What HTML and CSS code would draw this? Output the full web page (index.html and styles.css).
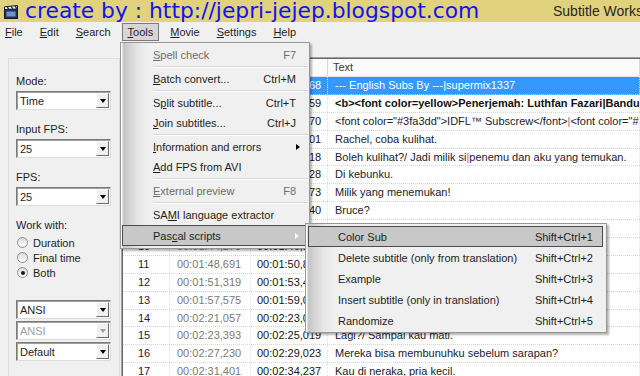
FILE: index.html
```html
<!DOCTYPE html>
<html lang="en">
<head>
  <meta charset="UTF-8">
  <title>Subtitle Workshop</title>
  <link rel="stylesheet" href="styles.css">
</head>
<body>
  <!-- title bar -->
  <div class="titlebar">
    <svg class="app-icon" viewBox="0 0 14 14" width="14" height="14">
      <rect x="0.5" y="4.5" width="13" height="9" fill="#22324e" stroke="#111a2a"/>
      <rect x="2.5" y="6.5" width="9" height="5" fill="#6d93cf"/>
      <path d="M0.5 1.8 L13.5 0.5 L13.5 4 L0.5 4.5 Z" fill="#f4f6fa" stroke="#111a2a"/>
      <path d="M3 1.4 L4.8 4.3 M7 1 L8.8 4.1 M11 0.7 L12.8 3.8" stroke="#22324e" stroke-width="1.4"/>
    </svg>
    <span class="caption">create by : http://jepri-jejep.blogspot.com</span>
    <span class="wintitle">Subtitle Workshop</span>
  </div>

  <!-- menu bar -->
  <div class="menubar">
    <span class="mi"><u>F</u>ile</span>
    <span class="mi"><u>E</u>dit</span>
    <span class="mi"><u>S</u>earch</span>
    <span class="mi open"><u>T</u>ools</span>
    <span class="mi"><u>M</u>ovie</span>
    <span class="mi"><u>S</u>ettings</span>
    <span class="mi"><u>H</u>elp</span>
  </div>
  <div class="toolbar"></div>

  <div class="main">
    <!-- left panel -->
    <div class="side">
      <div class="group">
        <div class="field">
          <div class="lbl">Mode:</div>
          <div class="combo"><span>Time</span><i class="drop"></i></div>
        </div>
        <div class="field">
          <div class="lbl">Input FPS:</div>
          <div class="combo"><span>25</span><i class="drop"></i></div>
        </div>
        <div class="field">
          <div class="lbl">FPS:</div>
          <div class="combo"><span>25</span><i class="drop"></i></div>
        </div>
        <div class="field">
          <div class="lbl">Work with:</div>
          <div class="radios">
            <div class="radio"><i></i>Duration</div>
            <div class="radio"><i></i>Final time</div>
            <div class="radio on"><i></i>Both</div>
          </div>
        </div>
        <div class="combos">
          <div class="combo"><span>ANSI</span><i class="drop"></i></div>
          <div class="combo off"><span>ANSI</span><i class="drop"></i></div>
          <div class="combo"><span>Default</span><i class="drop"></i></div>
        </div>
      </div>
    </div>

    <!-- subtitle list -->
    <div class="grid">
      <div class="grid-in">
        <div class="row head"><span>Num</span><span>Show</span><span>Hide</span><span>Text</span></div>
        <div class="row sel"><span>1</span><span>00:00:01,000</span><span>00:00:04,968</span><span>--- English Subs By ---|supermix1337</span></div>
        <div class="row"><span class="n">2</span><span class="st">00:00:05,100</span><span class="en">00:00:09,359</span><span class="tx b">&lt;b&gt;&lt;font color=yellow&gt;Penerjemah: Luthfan Fazari|Bandung&lt;/font&gt;&lt;/b&gt;</span></div>
        <div class="row"><span class="n">3</span><span class="st">00:00:09,460</span><span class="en">00:00:13,470</span><span class="tx">&lt;font color="#3fa3dd"&gt;IDFL™ Subscrew&lt;/font&gt;<em class="pipe">|</em>&lt;font color="#3fa3dd"&gt;</span></div>
        <div class="row"><span class="n">4</span><span class="st">00:01:24,230</span><span class="en">00:01:26,001</span><span class="tx">Rachel, coba kulihat.</span></div>
        <div class="row"><span class="n">5</span><span class="st">00:01:26,800</span><span class="en">00:01:29,718</span><span class="tx">Boleh kulihat?/ Jadi milik si<em class="pipe">|</em>penemu dan aku yang temukan.</span></div>
        <div class="row"><span class="n">6</span><span class="st">00:01:30,120</span><span class="en">00:01:31,628</span><span class="tx">Di kebunku.</span></div>
        <div class="row"><span class="n">7</span><span class="st">00:01:32,830</span><span class="en">00:01:34,473</span><span class="tx">Milik yang menemukan!</span></div>
        <div class="row"><span class="n">8</span><span class="st">00:01:38,130</span><span class="en">00:01:39,340</span><span class="tx">Bruce?</span></div>
        <div class="row"><span class="n">9</span><span class="st">00:01:41,260</span><span class="en">00:01:42,805</span><span class="tx">Ayo, Bruce.</span></div>
        <div class="row"><span class="n">10</span><span class="st">00:01:44,270</span><span class="en">00:01:46,152</span><span class="tx">Bruce!</span></div>
        <div class="row"><span class="n">11</span><span class="st">00:01:48,691</span><span class="en">00:01:50,860</span><span class="tx">Kau baik-baik saja?</span></div>
        <div class="row"><span class="n">12</span><span class="st">00:01:51,319</span><span class="en">00:01:53,400</span><span class="tx">Ayo kita pergi.</span></div>
        <div class="row"><span class="n">13</span><span class="st">00:01:57,575</span><span class="en">00:01:59,077</span><span class="tx">Tidak apa-apa.</span></div>
        <div class="row"><span class="n">14</span><span class="st">00:02:21,057</span><span class="en">00:02:23,059</span><span class="tx">Kau siap?</span></div>
        <div class="row"><span class="n">15</span><span class="st">00:02:23,393</span><span class="en">00:02:25,019</span><span class="tx">Lagi?/ Sampai kau mati.</span></div>
        <div class="row"><span class="n">16</span><span class="st">00:02:27,230</span><span class="en">00:02:29,023</span><span class="tx">Mereka bisa membunuhku sebelum sarapan?</span></div>
        <div class="row"><span class="n">17</span><span class="st">00:02:31,401</span><span class="en">00:02:34,237</span><span class="tx">Kau di neraka, pria kecil.</span></div>
      </div>
    </div>
  </div>

  <!-- Tools dropdown -->
  <div class="menu tools">
    <div class="item dim"><span><u>S</u>pell check</span><span>F7</span></div>
    <div class="sep"></div>
    <div class="item"><span><u>B</u>atch convert...</span><span>Ctrl+M</span></div>
    <div class="sep"></div>
    <div class="item"><span>S<u>p</u>lit subtitle...</span><span>Ctrl+T</span></div>
    <div class="item"><span><u>J</u>oin subtitles...</span><span>Ctrl+J</span></div>
    <div class="sep"></div>
    <div class="item"><span><u>I</u>nformation and errors</span><i class="arrow"></i></div>
    <div class="item"><span><u>A</u>dd FPS from AVI</span></div>
    <div class="sep"></div>
    <div class="item dim"><span><u>E</u>xternal preview</span><span>F8</span></div>
    <div class="sep"></div>
    <div class="item"><span>SA<u>M</u>I language extractor</span></div>
    <div class="item hl tall"><span>Pas<u>c</u>al scripts</span><i class="arrow"></i></div>
  </div>

  <!-- Pascal scripts submenu -->
  <div class="menu sub">
    <div class="item hl"><span>Color Sub</span><span>Shift+Ctrl+1</span></div>
    <div class="item"><span>Delete subtitle (only from translation)</span><span>Shift+Ctrl+2</span></div>
    <div class="item"><span>Example</span><span>Shift+Ctrl+3</span></div>
    <div class="item"><span>Insert subtitle (only in translation)</span><span>Shift+Ctrl+4</span></div>
    <div class="item"><span>Randomize</span><span>Shift+Ctrl+5</span></div>
  </div>
</body>
</html>
```

FILE: styles.css
```css
/* base */
body{
  margin:0;
  width:640px;
  height:376px;
  overflow:hidden;
  position:relative;
  background:#f0f0f0;
  font-family:"Liberation Sans",Arial,sans-serif;
  font-size:11px;
  color:#1e1e1e;
}
u{text-decoration:underline;}
em{font-style:normal;}

/* title bar */
.titlebar{
  height:22px;
  background:#e1d27d;
  display:flex;
  align-items:center;
}
.app-icon{
  flex:none;
  margin:2px 0 0 4px;
}
.caption{
  flex:1;
  margin-left:7px;
  font-family:"DejaVu Sans",sans-serif;
  font-size:21.8px;
  line-height:22px;
  color:#1212f2;
  white-space:nowrap;
}
.wintitle{
  flex:0 0 87px;
  font-size:14px;
  color:#262626;
  white-space:nowrap;
  overflow:hidden;
}

/* menu bar */
.menubar{
  height:20px;
  display:flex;
  align-items:center;
  gap:5px;
  margin-left:-1px;
}
.mi{
  height:18px;
  line-height:16px;
  padding:0 5px;
  border:1px solid transparent;
  box-sizing:border-box;
}
.mi.open{
  background:#d6d6d6;
  border-color:#7b7b7b;
}
.toolbar{height:15px;}

/* layout */
.main{
  display:flex;
  height:319px;
}
.side{
  width:121px;
  flex:none;
}
.group{
  margin:1px 0 0 8px;
  width:112px;
  height:330px;
  box-sizing:border-box;
  border:1px solid #d5dfe5;
  border-bottom:0;
  padding:16px 0 0 7px;
}
.field{
  display:flex;
  flex-direction:column;
  gap:3px;
  margin-bottom:13px;
}
.lbl{
  height:13px;
  line-height:13px;
  color:#1c1c2c;
}

/* combo boxes */
.combo{
  width:95px;
  height:19px;
  box-sizing:border-box;
  display:flex;
  align-items:center;
  background:#fff;
  border:1px solid;
  border-color:#7a7a7a #dcdcdc #dcdcdc #7a7a7a;
  box-shadow:inset 1px 1px 0 #a0a0a0;
}
.combo span{
  flex:1;
  padding-left:3px;
}
.drop{
  width:13px;
  height:15px;
  margin-right:1px;
  box-sizing:border-box;
  background:#f0f0f0;
  border:1px solid;
  border-color:#fff #6a6a6a #6a6a6a #fff;
  display:flex;
  align-items:center;
  justify-content:center;
}
.drop::after{
  content:"";
  border-style:solid;
  border-width:4px 3.5px 0;
  border-color:#000 transparent transparent;
}
.combo.off{color:#a0a0a0;}
.combo.off .drop::after{border-top-color:#a0a0a0;}
/* margins collapse with the field above, so this is the full gap */
.combos{
  display:flex;
  flex-direction:column;
  gap:2px;
  margin-top:20px;
}

/* radio buttons */
.radio{
  height:15px;
  display:flex;
  align-items:center;
  padding-left:1px;
}
.radio i{
  width:11px;
  height:11px;
  margin-right:5px;
  box-sizing:border-box;
  border:1px solid #8e8f8f;
  border-radius:50%;
  background:linear-gradient(#dcdcdc,#fff);
  position:relative;
}
.radio.on i::after{
  content:"";
  position:absolute;
  left:2.5px;
  top:2.5px;
  width:4px;
  height:4px;
  border-radius:50%;
  background:#1a1a1a;
}

/* subtitle grid */
.grid{
  flex:1;
  overflow:hidden;
  background:#fff;
  border-top:1px solid #a0a0a0;
  border-left:1px solid #a0a0a0;
}
.grid-in{
  height:100%;
  border-top:1px solid #696969;
  border-left:1px solid #696969;
}
.row{
  display:grid;
  grid-template-columns:47px 81px 77px 1fr;
  height:17.9px;
  box-sizing:border-box;
  line-height:17px;
  border-bottom:1px dotted #d6d6d6;
  white-space:nowrap;
}
.row span{
  overflow:hidden;
  padding-left:7px;
  border-right:1px dotted #e0e0e0;
}
.row span:nth-child(1){padding-left:15px;}
.row span:nth-child(3){padding-left:6px;}
.row.head{
  height:18px;
  background:#fbfbfb;
  border-bottom:1px solid #e3e3e3;
  color:#3a3a3a;
}
.row.head span{border-right:1px solid #d8d8d8;}
.row.head span:nth-child(4){padding-left:5px;}
.n{color:#1c1c48;}
.st{color:#7a7a7a;}
.en{color:#161616;}
.tx{color:#22222e;}
.b{font-weight:bold;color:#111;}
.pipe{color:#e0507a;}
.row.sel{background:#3399ff;}
.row.sel span{color:#fff;}

/* popup menus */
.menu{
  position:absolute;
  box-sizing:border-box;
  border:1px solid #979797;
  background:linear-gradient(to right,#fdfdfd 0,#fdfdfd 1px,#c4c4c4 2px,#e4e4e4 16px,#f0f0f0 27px);
  box-shadow:2px 2px 2px rgba(0,0,0,.3);
}
.tools{
  left:120px;
  top:42px;
  width:190px;
  padding:2px 0;
}
.sub{
  left:305px;
  top:223px;
  width:302px;
  padding:2px 0 1px;
}
.item{
  height:20px;
  box-sizing:border-box;
  display:flex;
  align-items:center;
  justify-content:space-between;
  padding:0 13px 0 32px;
  color:#1e1e1e;
  white-space:nowrap;
}
.item.dim{color:#6d6d6d;}
.item.tall{height:21px;}
.tools .item.hl{
  margin:0 1px;
  padding:0 12px 0 30px;
}
.item.hl{
  background:#c8c8c8;
  border:1px solid #4c4c4c;
}
.sub .item{height:21px;}
.sub .item.hl{
  margin:0 3px 0 2px;
  padding:0 9px 0 29px;
}
.sep{
  height:1px;
  margin:1px 1px 1px 32px;
  background:#d7d7d7;
  border-bottom:1px solid #fff;
}
.arrow{
  margin-right:-4px;
  border-style:solid;
  border-width:3.5px 0 3.5px 4px;
  border-color:transparent transparent transparent #000;
}
.item.hl .arrow{border-left-color:#fafafa;}
```
